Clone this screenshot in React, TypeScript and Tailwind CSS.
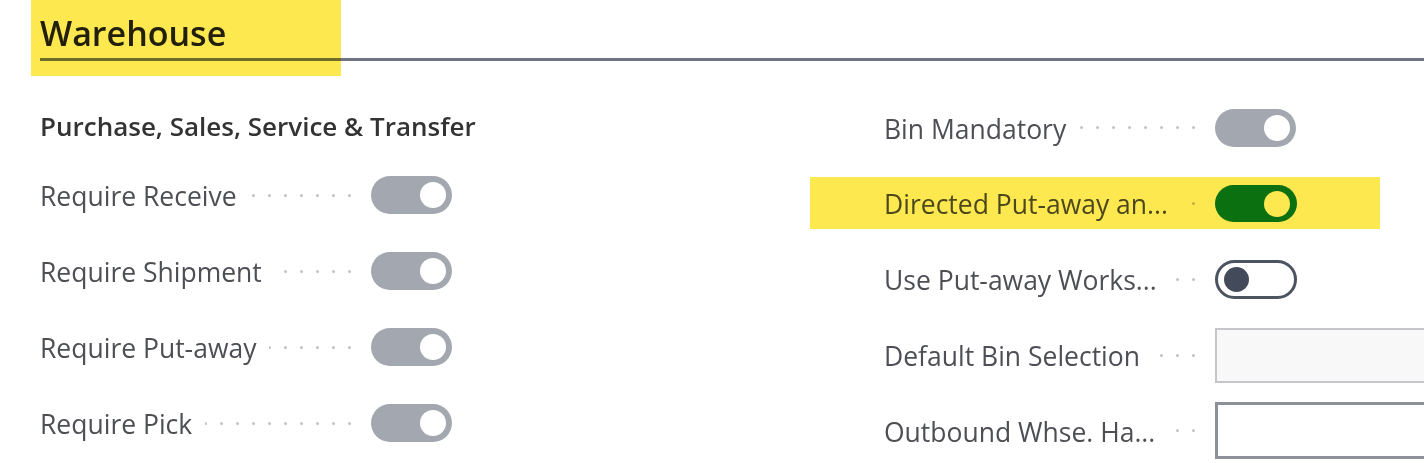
import React from "react";

const Dots = () => (
  <div className="flex-1 min-w-0 flex justify-end items-center gap-[13px] overflow-hidden ml-[13px] mr-[20px]">
    {Array.from({ length: 24 }).map((_, i) => (
      <span key={i} className="shrink-0 w-[3px] h-[3px] rounded-full bg-[#c2c2c2]" />
    ))}
  </div>
);

const GrayToggle = () => (
  <div className="shrink-0 w-[81px] h-[38px] rounded-full bg-[#a3a8b0] flex items-center justify-end pr-[6px]">
    <span className="w-[26px] h-[26px] rounded-full bg-white" />
  </div>
);

const GreenToggle = () => (
  <div className="shrink-0 w-[82px] h-[37px] rounded-full bg-[#0b7b2f] flex items-center justify-end pr-[7px]">
    <span className="w-[26px] h-[26px] rounded-full bg-white" />
  </div>
);

const OffToggle = () => (
  <div className="shrink-0 w-[82px] h-[39px] rounded-full border-[3px] border-[#4c5361] bg-white flex items-center justify-start pl-[6px]">
    <span className="w-[25px] h-[25px] rounded-full bg-[#434b5a]" />
  </div>
);

const Row = ({ label, control, h }: { label: string; control: React.ReactNode; h: string }) => (
  <div className={`flex items-center ${h}`}>
    <div className="w-[331px] shrink-0 flex items-center">
      <span className="text-[26.5px] leading-none text-[#4d4f55] whitespace-nowrap pt-[2px]">{label}</span>
      <Dots />
    </div>
    {control}
  </div>
);

export default function App() {
  return (
    <div className="relative w-[1424px] h-[463px] bg-white overflow-hidden font-['Open_Sans',sans-serif]">
      <div className="pl-[40px] pt-[12px]">
        <div className="h-[49px] border-b-[3px] border-[#6f7582] flex items-start pt-[4px]">
          <span className="text-[34px] font-semibold leading-none text-[#222222]">Warehouse</span>
        </div>
      </div>

      <div className="grid grid-cols-[844px_1fr] pl-[40px] pt-[29px]">
        <div className="flex flex-col">
          <div className="h-[67px] flex items-center pt-[4px]">
            <span className="text-[26px] font-semibold leading-none text-[#333333] whitespace-nowrap">
              Purchase, Sales, Service &amp; Transfer
            </span>
          </div>
          <Row label="Require Receive" control={<GrayToggle />} h="h-[76px]" />
          <Row label="Require Shipment" control={<GrayToggle />} h="h-[76px]" />
          <Row label="Require Put-away" control={<GrayToggle />} h="h-[76px]" />
          <Row label="Require Pick" control={<GrayToggle />} h="h-[76px]" />
        </div>
        <div className="flex flex-col">
          <Row label="Bin Mandatory" control={<GrayToggle />} h="h-[75.75px]" />
          <Row label="Directed Put-away an..." control={<GreenToggle />} h="h-[75.75px]" />
          <Row label="Use Put-away Works..." control={<OffToggle />} h="h-[75.75px]" />
          <Row
            label="Default Bin Selection"
            control={<div className="shrink-0 w-[260px] h-[55px] border-2 border-[#c4c6ca] bg-[#f8f8f8]" />}
            h="h-[75.75px]"
          />
          <Row
            label="Outbound Whse. Ha..."
            control={<div className="shrink-0 w-[260px] h-[57px] border-[3px] border-[#8b9099] bg-white" />}
            h="h-[75.75px]"
          />
        </div>
      </div>

      <div className="absolute left-[31px] top-0 w-[310px] h-[76px] bg-[#fee850] mix-blend-multiply" />
      <div className="absolute left-[810px] top-[177px] w-[570px] h-[52px] bg-[#fee850] mix-blend-multiply" />
    </div>
  );
}
